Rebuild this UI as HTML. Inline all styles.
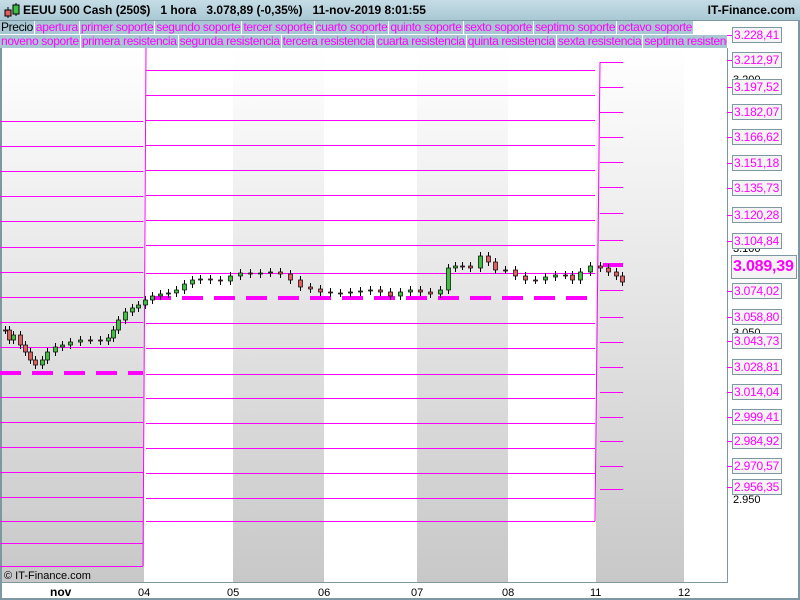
<!DOCTYPE html>
<html><head><meta charset="utf-8"><style>
body{margin:0;width:800px;height:600px;overflow:hidden;background:#fff;font-family:"Liberation Sans",sans-serif;position:relative}
#hdr{position:absolute;left:0;top:0;width:800px;height:20px;background:linear-gradient(#c6dde6,#a9c8d4);border-bottom:1px solid #7d97a3}
#hdr .t{position:absolute;left:23px;top:3px;font-size:12px;font-weight:bold;color:#000}
#hdr .r{position:absolute;right:5px;top:3px;font-size:12px;font-weight:bold}
.row{position:absolute;left:0;height:13px;display:flex;font-size:12px;letter-spacing:-0.35px;line-height:13px;white-space:nowrap;overflow:hidden}
.row span{background:#a9c7d3;color:#f0f;border-right:1px solid #fff;border-bottom:1px solid #7d97a3;padding:0 1px 0 1px;height:13px}
.lbl{position:absolute;left:732px;width:47px;height:14px;border:1px solid #7d97a3;background:#f4f4f4;color:#f0f;font-size:12px;line-height:14px;padding-left:1px;letter-spacing:-0.2px}
</style></head><body>
<svg width="800" height="600" style="position:absolute;left:0;top:0">
<defs>
<linearGradient id="g" x1="0" y1="0" x2="0" y2="1"><stop offset="0" stop-color="#fff"/><stop offset="1" stop-color="#c8c8c8"/></linearGradient>
</defs>
<rect x="0" y="48" width="144" height="534" fill="url(#g)"/>
<rect x="233" y="48" width="91" height="534" fill="url(#g)"/>
<rect x="417" y="48" width="91" height="534" fill="url(#g)"/>
<rect x="596" y="48" width="88" height="534" fill="url(#g)"/>
<line x1="1" y1="48" x2="1" y2="600" stroke="#7d97a3" stroke-width="2"/>
<line x1="727.5" y1="48" x2="727.5" y2="582" stroke="#7d97a3"/>
<line x1="0" y1="582.5" x2="728" y2="582.5" stroke="#7d97a3"/>
<line x1="799" y1="0" x2="799" y2="600" stroke="#7d97a3" stroke-width="2"/>
<line x1="0" y1="599" x2="800" y2="599" stroke="#7d97a3" stroke-width="2"/>
<g id="lines" stroke="#f0f" stroke-width="1" fill="none"></g>
<g id="c"></g>
<g font-size="11" fill="#000">
<text x="50" y="596" font-weight="bold" font-size="12">nov</text>
<text x="138" y="596">04</text><text x="227" y="596">05</text><text x="318" y="596">06</text>
<text x="411" y="596">07</text><text x="502" y="596">08</text><text x="590" y="596">11</text><text x="678" y="596">12</text>
<text x="4" y="579" font-size="11">© IT-Finance.com</text>
<text x="733" y="83">3.200</text><text x="733" y="252">3.100</text><text x="733" y="336">3.050</text><text x="733" y="503">2.950</text>
</g>
</svg>
<div id="hdr"><svg width="20" height="18" style="position:absolute;left:3px;top:2px"><line x1="5" y1="5" x2="5" y2="16" stroke="#000"/><rect x="2" y="8" width="6" height="6" fill="#e06060" stroke="#000"/><line x1="13" y1="1" x2="13" y2="14" stroke="#000"/><rect x="10" y="3" width="6" height="9" fill="#40c040" stroke="#000"/></svg><span class="t">EEUU 500 Cash (250$)&nbsp;&nbsp;&nbsp;1 hora&nbsp;&nbsp;&nbsp;3.078,89 (-0,35%)&nbsp;&nbsp;&nbsp;11-nov-2019 8:01:55</span><span class="r">IT-Finance.com</span></div>
<div class="row" style="top:21px;width:800px"><span style="color:#000">Precio</span><span>apertura</span><span>primer soporte</span><span>segundo soporte</span><span>tercer soporte</span><span>cuarto soporte</span><span>quinto soporte</span><span>sexto soporte</span><span>septimo soporte</span><span>octavo soporte</span></div>
<div class="row" style="top:35px;width:727px"><span>noveno soporte</span><span>primera resistencia</span><span>segunda resistencia</span><span>tercera resistencia</span><span>cuarta resistencia</span><span>quinta resistencia</span><span>sexta resistencia</span><span>septima resistencia</span></div>
<div id="labels"></div>
<div class="lbl" style="top:255px;height:22px;width:63px;font-size:16px;font-weight:bold;line-height:22px;left:731px">3.089,39</div>
<script>
var NS="http://www.w3.org/2000/svg",L=document.getElementById("lines"),C=document.getElementById("c");
function ln(x1,y1,x2,y2,a){var e=document.createElementNS(NS,"line");e.setAttribute("x1",x1);e.setAttribute("y1",y1);e.setAttribute("x2",x2);e.setAttribute("y2",y2);if(a)for(var k in a)e.setAttribute(k,a[k]);L.appendChild(e);}
var left=[121,146,171,196,221,247,272,297,322,347,372,397,422,447,472,497,521,543,566];
left.forEach(function(y){if(y!=372)ln(0,y+.5,143,y+.5)});
var mid=[47,70,95,120,145,170,195,220,245,273,323,348,374,398,423,448,473,498,521];
mid.forEach(function(y){ln(146,y+.5,595,y+.5)});
var right=[62,87,112,137,162,187,213,240,290,317,342,367,392,417,441,466,489];
right.forEach(function(y){ln(600,y+.5,623,y+.5)});
ln(143,566,146,47);ln(595,521,600,62);
ln(0,373,143,373,{"stroke-width":4,"stroke-dasharray":"21 11"});
ln(150,298,590,298,{"stroke-width":4,"stroke-dasharray":"21 11"});
ln(603,265,623,265,{"stroke-width":4});
var labs=["3.228,41","3.212,97","3.197,52","3.182,07","3.166,62","3.151,18","3.135,73","3.120,28","3.104,84",null,"3.074,02","3.058,80","3.043,73","3.028,81","3.014,04","2.999,41","2.984,92","2.970,57","2.956,35"];
var ly=[35,60,87,112,137,163,188,215,241,266,291,317,341,367,392,417,441,466,487],h="";
labs.forEach(function(t,i){if(t){h+='<div class="lbl" style="top:'+(ly[i]-8)+'px">'+t+'</div>';ln(727,ly[i]+.5,732,ly[i]+.5);}});
document.getElementById("labels").innerHTML=h;
var pts=[[5,330],[9,340],[13,335],[20,345],[25,352],[30,360],[35,365],[42,360],[47,352],[55,347],[62,345],[70,342],[80,340],[90,340],[100,341],[108,338],[113,330],[118,320],[125,312],[132,308],[138,305],[145,300],[152,296],[160,294],[168,293],[176,290],[184,284],[192,280],[200,279],[210,280],[220,281],[230,276],[240,273],[250,274],[260,273],[270,272],[280,274],[290,280],[300,287],[310,289],[320,292],[330,293],[340,293],[350,292],[360,291],[370,290],[380,292],[390,296],[400,292],[410,290],[420,292],[430,294],[440,290],[448,268],[455,266],[462,266],[470,268],[480,256],[488,262],[495,270],[505,270],[515,276],[525,280],[535,280],[545,277],[555,275],[565,275],[572,280],[580,272],[590,266],[600,268],[608,272],[616,276],[622,282]];
var p=pts[0][1];
pts.forEach(function(q){var o=p,c=q[1];var top=Math.min(o,c),bot=Math.max(o,c);var w=document.createElementNS(NS,"line");w.setAttribute("x1",q[0]+.5);w.setAttribute("x2",q[0]+.5);w.setAttribute("y1",top-4);w.setAttribute("y2",bot+4);w.setAttribute("stroke","#000");C.appendChild(w);var r=document.createElementNS(NS,"rect");r.setAttribute("x",q[0]-1.5);r.setAttribute("y",top);r.setAttribute("width",4);r.setAttribute("height",Math.max(1,bot-top));r.setAttribute("fill",c<o?"#40c040":"#e06060");r.setAttribute("stroke","#000");r.setAttribute("stroke-width",.7);C.appendChild(r);p=c;});
</script>
</body></html>
